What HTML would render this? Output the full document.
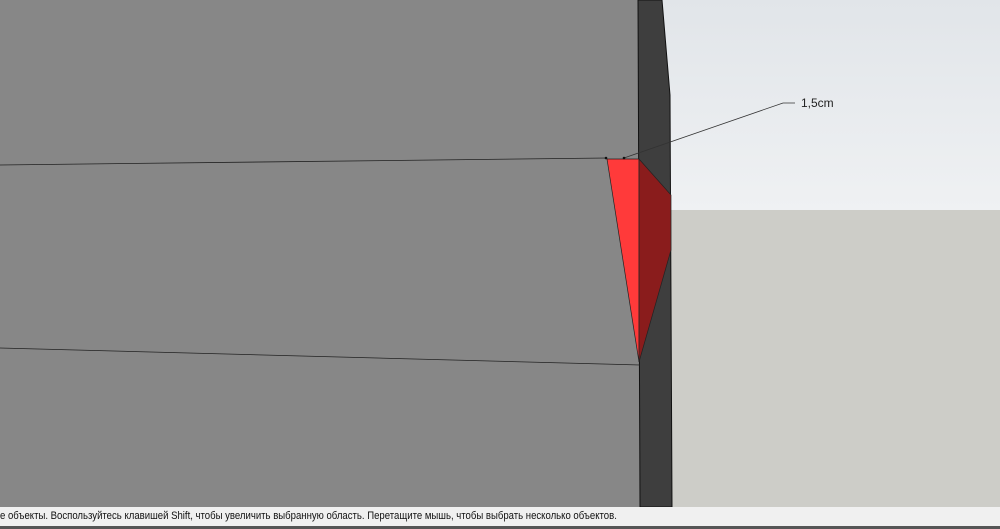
<!DOCTYPE html><html><head><style>body{margin:0;width:1000px;height:529px;overflow:hidden;font-family:"Liberation Sans",sans-serif}</style></head><body>
<svg width="1000" height="529" style="position:absolute;left:0;top:0">
<defs><linearGradient id="s" x1="0" y1="0" x2="0" y2="1"><stop offset="0" stop-color="#e1e5e9"/><stop offset="1" stop-color="#eff1f3"/></linearGradient></defs>
<rect x="0" y="0" width="1000" height="210" fill="url(#s)"/>
<rect x="0" y="210" width="1000" height="300" fill="#cdcdc8"/>
<rect x="0" y="0" width="640" height="507" fill="#878787"/>
<polygon points="638,0 662,0 670,95 672,507 640,507" fill="#3e3e3e" stroke="#111" stroke-width="1"/>
<polygon points="607,159 639,159 639,362" fill="#ff3a3a" stroke="#222" stroke-width="0.7"/>
<polygon points="639,159 671,195 671,250 639,362" fill="#8a1c1c" stroke="#222" stroke-width="0.7"/>
<line x1="0" y1="165" x2="607" y2="158" stroke="#222" stroke-width="0.8"/>
<line x1="0" y1="348" x2="640" y2="365" stroke="#222" stroke-width="0.8"/>
<polyline points="624,158 783,103 795,103" fill="none" stroke="#333" stroke-width="0.8"/>
<circle cx="606" cy="158" r="1.3" fill="#111"/>
<circle cx="624" cy="158" r="1.3" fill="#111"/>
<text x="801" y="107" font-size="12" fill="#222" font-family="Liberation Sans">1,5cm</text>
</svg>
<div style="position:absolute;left:0;top:507px;width:1000px;height:19px;background:#f0f0f0"></div>
<div style="position:absolute;left:0;top:507px;height:19px;font-size:11px;line-height:19px;color:#111;white-space:nowrap;transform:scaleX(0.87);transform-origin:0 0">е объекты. Воспользуйтесь клавишей Shift, чтобы увеличить выбранную область. Перетащите мышь, чтобы выбрать несколько объектов.</div>
<div style="position:absolute;left:0;top:526px;width:1000px;height:3px;background:#555"></div>
</body></html>
